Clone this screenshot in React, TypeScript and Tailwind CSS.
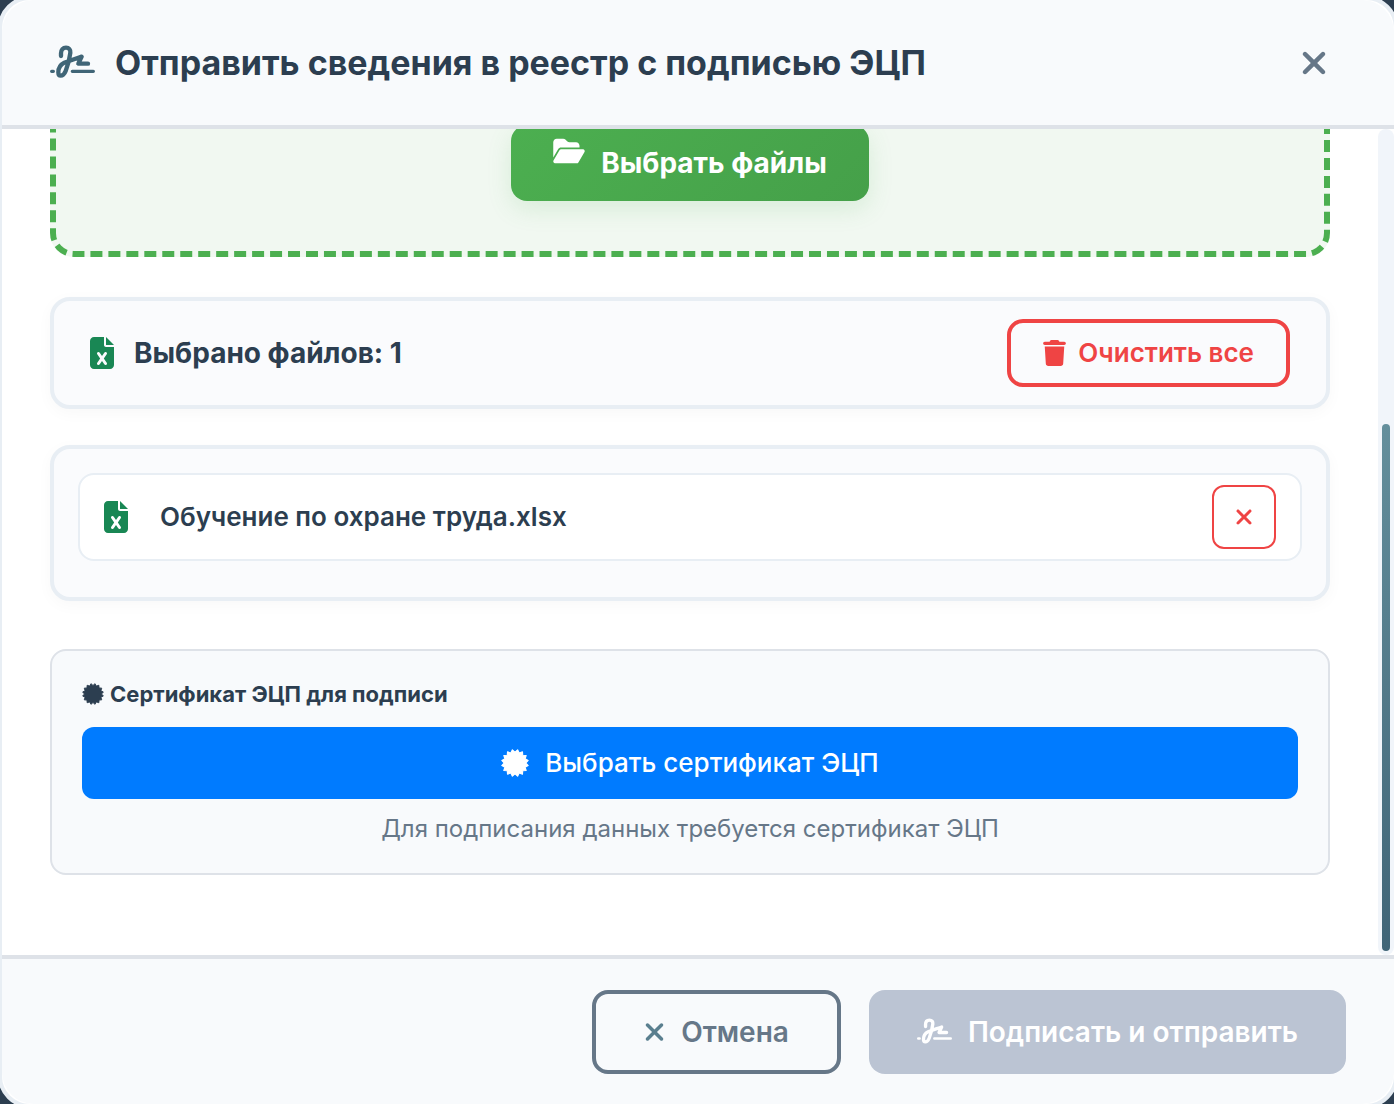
import { useState } from 'react';
import { FaFileExcel, FaFolderOpen, FaTrash, FaXmark } from 'react-icons/fa6';

function SignatureIcon({ className }: { className: string }) {
    return (
        <svg viewBox="18 20 135 108" fill="none" stroke="currentColor" strokeLinecap="round" strokeLinejoin="round" className={className} aria-hidden="true">
            <path
                strokeWidth="13"
                d="M51 53V45C51 34 57 28 66 28C75 28 80 34 79 43C77 61 71 82 65 98C61 108 56 112 50 112C45 112 43 108 43 102C43 90 47 80 61 73C78 66 96 61 113 55L103 76H132"
            />
            <path strokeWidth="10" d="M23 99H28M85 99H148" />
        </svg>
    );
}

// Star badge: 16 short teeth around a disc
const badgePoints = Array.from({ length: 32 }, (_, i) => {
    const radius = i % 2 ? 48 : 39;
    const angle = (i * Math.PI) / 16;
    return `${50 + radius * Math.cos(angle)},${50 + radius * Math.sin(angle)}`;
}).join(' ');

function BadgeIcon({ className }: { className: string }) {
    return (
        <svg viewBox="0 0 100 100" fill="currentColor" stroke="currentColor" strokeWidth="4" strokeLinejoin="round" className={className} aria-hidden="true">
            <polygon points={badgePoints} />
        </svg>
    );
}

export default function App() {
    const [files, setFiles] = useState<string[]>(['Обучение по охране труда.xlsx']);

    const removeFile = (name: string) => setFiles(files.filter((file) => file !== name));

    return (
        <div className="h-screen overflow-hidden bg-[#2c3e50] font-['Inter',sans-serif] text-[#2c3e50]">
            <div
                role="dialog"
                aria-labelledby="dialog-title"
                className="-mt-1 -mr-1 -ml-0.5 flex h-[calc(100vh+8px)] flex-col overflow-hidden rounded-[32px] border-4 border-[#e8eef4] bg-white"
            >
                {/* Header */}
                <header className="flex h-[129px] shrink-0 items-center justify-between rounded-t-[32px] border-b-4 border-[#dee2e8] bg-[#f8fafc] px-12">
                    <div className="flex items-center gap-5">
                        <SignatureIcon className="h-9 w-[45px] text-[#406577]" />
                        <h1 id="dialog-title" className="text-[34px] leading-10 font-bold">
                            Отправить сведения в реестр с подписью ЭЦП
                        </h1>
                    </div>
                    <button aria-label="Закрыть" className="flex size-16 items-center justify-center text-[#667788]">
                        <FaXmark className="size-9" />
                    </button>
                </header>

                {/* Body, anchored to its end */}
                <div className="flex min-h-0 grow">
                    <main className="flex min-w-0 grow flex-col justify-end overflow-hidden px-12 pb-20">
                        <section className="mb-10 flex h-[529px] shrink-0 items-end justify-center rounded-3xl border-6 border-dashed border-[#4caf50] bg-[#f1f8f1] pb-[50px]">
                            <button className="flex h-19 items-center gap-4 rounded-2xl bg-linear-135 from-[#4caf50] to-[#45a049] px-[42px] text-[28px] leading-9 font-bold text-white shadow-[0_8px_24px_rgba(76,175,80,0.15)]">
                                <FaFolderOpen className="mt-3 h-7 w-8 self-start" />
                                Выбрать файлы
                            </button>
                        </section>

                        <section className="mb-9 flex h-28 shrink-0 items-center justify-between rounded-[20px] border-4 border-[#e8eef4] bg-[#fafbfd] px-9 shadow-[0_4px_16px_rgba(0,0,0,0.03)]">
                            <div className="flex items-center gap-5">
                                <FaFileExcel className="h-8 w-6 text-[#198754]" />
                                <h2 className="text-[28px] leading-9 font-bold">Выбрано файлов: {files.length}</h2>
                            </div>
                            <button
                                onClick={() => setFiles([])}
                                className="flex h-17 items-center gap-3 rounded-2xl border-4 border-[#ef4444] px-8 text-[26px] leading-8 font-semibold text-[#ef4444]"
                            >
                                <FaTrash className="h-[26px] w-[23px]" />
                                Очистить все
                            </button>
                        </section>

                        <ul className="mb-12 shrink-0 rounded-[20px] border-4 border-[#e8eef4] bg-[#fafbfd] p-6 shadow-[0_4px_16px_rgba(0,0,0,0.03)]">
                            {files.map((name) => (
                                <li
                                    key={name}
                                    className="mb-3 flex h-22 items-center justify-between rounded-2xl border-2 border-[#e8eef4] bg-white px-6"
                                >
                                    <div className="flex items-center gap-8">
                                        <FaFileExcel className="h-8 w-6 text-[#198754]" />
                                        <span className="text-[26px] leading-8 font-semibold">{name}</span>
                                    </div>
                                    <button
                                        aria-label="Удалить файл"
                                        onClick={() => removeFile(name)}
                                        className="flex size-16 items-center justify-center rounded-xl border-2 border-[#ef4444] text-[#ef4444]"
                                    >
                                        <FaXmark className="size-6" />
                                    </button>
                                </li>
                            ))}
                        </ul>

                        <section className="shrink-0 rounded-2xl border-2 border-[#dee2e8] bg-[#f8fafc] p-[30px]">
                            <h3 className="mb-5 flex items-center gap-1.5 text-[22px] leading-[26px] font-bold">
                                <BadgeIcon className="size-[22px]" />
                                Сертификат ЭЦП для подписи
                            </h3>
                            <button className="flex h-18 w-full items-center justify-center gap-4 rounded-xl bg-[#007bff] text-[26px] leading-9 font-medium text-white">
                                <BadgeIcon className="size-7" />
                                Выбрать сертификат ЭЦП
                            </button>
                            <p className="mt-4 text-center text-2xl leading-7 text-[#667788]">
                                Для подписания данных требуется сертификат ЭЦП
                            </p>
                        </section>
                    </main>

                    {/* Scroll track */}
                    <div className="flex w-4 shrink-0 flex-col justify-end rounded-lg bg-[#f1f5fa] p-1">
                        <div className="h-[527px] rounded-full bg-linear-to-b from-[#648f9c] to-[#406577]" />
                    </div>
                </div>

                {/* Footer */}
                <footer className="flex h-[149px] shrink-0 items-center justify-end gap-7 rounded-b-[32px] border-t-4 border-[#dee2e8] bg-[#f8fafc] px-12">
                    <button className="flex h-21 items-center gap-4 rounded-2xl border-4 border-[#667788] px-12 text-[28px] leading-9 font-semibold text-[#667788]">
                        <FaXmark className="h-7 w-[21px] text-[#5a7f8f]" />
                        Отмена
                    </button>
                    <button
                        disabled
                        className="flex h-21 items-center gap-4 rounded-2xl bg-[#bbc4d3] px-12 text-[28px] leading-9 font-semibold text-white"
                    >
                        <SignatureIcon className="h-7 w-[35px]" />
                        Подписать и отправить
                    </button>
                </footer>
            </div>
        </div>
    );
}
